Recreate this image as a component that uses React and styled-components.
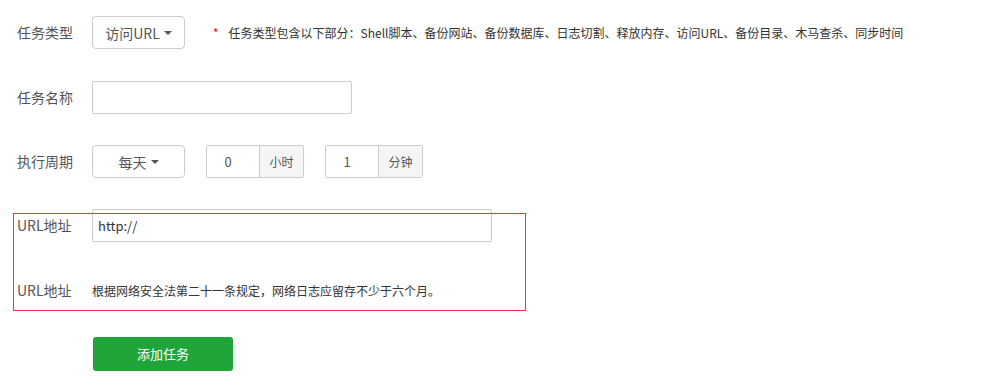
import React from 'react';
import styled, { createGlobalStyle } from 'styled-components';

const GlobalStyle = createGlobalStyle`
  html, body {
    margin: 0;
    padding: 0;
    background: #fff;
  }
  body {
    font-family: "Noto Sans CJK SC", "Microsoft YaHei", sans-serif;
    color: #333;
  }
  * {
    box-sizing: border-box;
  }
`;

const App = () => {
  return (
    <>
      <GlobalStyle />
      <Form>
        <Row $mb={32}>
          <Label>任务类型</Label>
          <SelectButton>
            访问URL <Caret />
          </SelectButton>
          <Note>
            <Star>*</Star>任务类型包含以下部分：Shell脚本、备份网站、备份数据库、日志切割、释放内存、访问URL、备份目录、木马查杀、同步时间
          </Note>
        </Row>

        <Row>
          <Label>任务名称</Label>
          <TextInput $width={260} />
        </Row>

        <Row>
          <Label>执行周期</Label>
          <SelectButton>
            每天 <Caret />
          </SelectButton>
          <InputGroup>
            <NumberInput defaultValue="0" />
            <Addon>小时</Addon>
          </InputGroup>
          <InputGroup>
            <NumberInput defaultValue="1" />
            <Addon>分钟</Addon>
          </InputGroup>
        </Row>

        <Highlight>
          <Row $mb={32}>
            <Label>URL地址</Label>
            <TextInput $width={400} defaultValue="http://" />
          </Row>
          <Row $mb={30}>
            <Label>URL地址</Label>
            <Hint>根据网络安全法第二十一条规定，网络日志应留存不少于六个月。</Hint>
          </Row>
          <Frame />
        </Highlight>

        <Row>
          <Label />
          <SubmitButton>添加任务</SubmitButton>
        </Row>
      </Form>
    </>
  );
};

const Form = styled.div`
  padding: 16px 0 0 17px;
`;

const Row = styled.div`
  display: flex;
  align-items: center;
  height: 33px;
  margin-bottom: ${(p) => (p.$mb !== undefined ? p.$mb : 31)}px;
`;

const Label = styled.span`
  width: 75px;
  flex-shrink: 0;
  font-size: 14px;
  line-height: 33px;
  color: #555;
`;

const SelectButton = styled.button`
  width: 93px;
  height: 33px;
  display: flex;
  align-items: center;
  justify-content: center;
  gap: 4px;
  padding: 0;
  margin-right: 21px;
  border: 1px solid #ccc;
  border-radius: 4px;
  background: #fff;
  color: #555;
  font-family: inherit;
  font-size: 14px;
  cursor: pointer;
`;

const Caret = styled.span`
  display: inline-block;
  width: 0;
  height: 0;
  border-top: 4px solid #555;
  border-left: 4px solid transparent;
  border-right: 4px solid transparent;
`;

const Note = styled.span`
  margin-left: 7px;
  font-size: 12px;
  color: #333;
  white-space: nowrap;
`;

const Star = styled.span`
  color: #f00;
  margin-right: 10px;
`;

const TextInput = styled.input`
  width: ${(p) => p.$width}px;
  height: 33px;
  padding: 0 5px;
  border: 1px solid #ccc;
  border-radius: 2px;
  font-family: inherit;
  font-size: 13px;
  color: #333;
  outline: none;
`;

const InputGroup = styled.div`
  display: flex;
  height: 33px;
  margin-right: 21px;
  border: 1px solid #ccc;
  border-radius: 2px;
  overflow: hidden;
`;

const NumberInput = styled.input`
  width: 53px;
  height: 100%;
  padding: 0 10px 0 0;
  border: none;
  border-right: 1px solid #ccc;
  text-align: center;
  font-family: inherit;
  font-size: 13px;
  color: #555;
  outline: none;
`;

const Addon = styled.span`
  width: 43px;
  display: flex;
  align-items: center;
  justify-content: center;
  background: #f5f5f5;
  font-size: 12px;
  color: #555;
`;

const Highlight = styled.div`
  position: relative;
`;

const Frame = styled.div`
  position: absolute;
  left: -4px;
  top: 4px;
  width: 513px;
  height: 98px;
  border: 1px solid #f33;
  pointer-events: none;
`;

const Hint = styled.span`
  font-size: 12px;
  color: #333;
`;

const SubmitButton = styled.button`
  width: 140px;
  height: 34px;
  margin-left: 1px;
  border: none;
  border-radius: 3px;
  background: #20a53a;
  color: #fff;
  font-family: inherit;
  font-size: 13px;
  cursor: pointer;
`;

export default App;
